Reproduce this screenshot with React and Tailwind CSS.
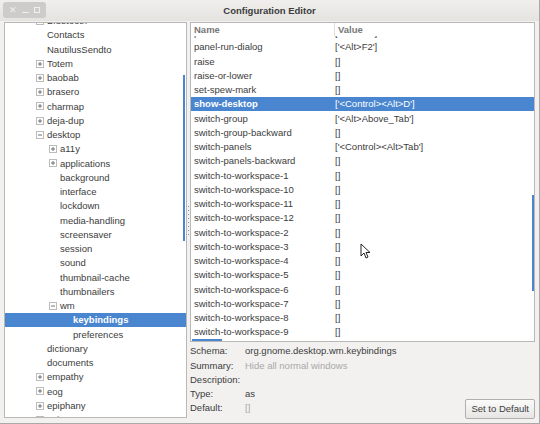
import React from 'react';

const tree = [
  { t: 'Bluetooth', l: 1, e: '+' },
  { t: 'Contacts', l: 1 },
  { t: 'NautilusSendto', l: 1 },
  { t: 'Totem', l: 1, e: '+' },
  { t: 'baobab', l: 1, e: '+' },
  { t: 'brasero', l: 1, e: '+' },
  { t: 'charmap', l: 1, e: '+' },
  { t: 'deja-dup', l: 1, e: '+' },
  { t: 'desktop', l: 1, e: '-' },
  { t: 'a11y', l: 2, e: '+' },
  { t: 'applications', l: 2, e: '+' },
  { t: 'background', l: 2 },
  { t: 'interface', l: 2 },
  { t: 'lockdown', l: 2 },
  { t: 'media-handling', l: 2 },
  { t: 'screensaver', l: 2 },
  { t: 'session', l: 2 },
  { t: 'sound', l: 2 },
  { t: 'thumbnail-cache', l: 2 },
  { t: 'thumbnailers', l: 2 },
  { t: 'wm', l: 2, e: '-' },
  { t: 'keybindings', l: 3, sel: true },
  { t: 'preferences', l: 3 },
  { t: 'dictionary', l: 1 },
  { t: 'documents', l: 1 },
  { t: 'empathy', l: 1, e: '+' },
  { t: 'eog', l: 1, e: '+' },
  { t: 'epiphany', l: 1, e: '+' },
  { t: 'evince', l: 1, e: '+' },
];

const keys = [
  ['panel-main-menu', "['<Alt>F1']"],
  ['panel-run-dialog', "['<Alt>F2']"],
  ['raise', '[]'],
  ['raise-or-lower', '[]'],
  ['set-spew-mark', '[]'],
  ['show-desktop', "['<Control><Alt>D']", true],
  ['switch-group', "['<Alt>Above_Tab']"],
  ['switch-group-backward', '[]'],
  ['switch-panels', "['<Control><Alt>Tab']"],
  ['switch-panels-backward', '[]'],
  ['switch-to-workspace-1', '[]'],
  ['switch-to-workspace-10', '[]'],
  ['switch-to-workspace-11', '[]'],
  ['switch-to-workspace-12', '[]'],
  ['switch-to-workspace-2', '[]'],
  ['switch-to-workspace-3', '[]'],
  ['switch-to-workspace-4', '[]'],
  ['switch-to-workspace-5', '[]'],
  ['switch-to-workspace-6', '[]'],
  ['switch-to-workspace-7', '[]'],
  ['switch-to-workspace-8', '[]'],
  ['switch-to-workspace-9', '[]'],
];

const indent = { 1: 'pl-[31px]', 2: 'pl-[44px]', 3: 'pl-[57px]' };

const Expander = ({ kind }) => (
  <span className="w-[11px] h-[8px] shrink-0 flex items-center">
    {kind ? (
      <svg width="8" height="8" viewBox="0 0 8 8">
        <rect x="0.5" y="0.5" width="7" height="7" fill="#fff" stroke="#bcbcbc" />
        <path d="M2 4h4" stroke="#707070" />
        {kind === '+' && <path d="M4 2v4" stroke="#707070" />}
      </svg>
    ) : null}
  </span>
);

const TreeRow = ({ row }) => (
  <div
    className={`h-[14.25px] flex items-center ${indent[row.l]} ${
      row.sel ? 'bg-[#4a86d0] text-white font-bold' : 'text-[#3c3c3c]'
    }`}
  >
    <Expander kind={row.e} />
    <span className="whitespace-nowrap">{row.t}</span>
  </div>
);

export default function App() {
  return (
    <div
      className="w-[540px] h-[424px] bg-[#f2f1f0] flex flex-col overflow-hidden relative border-r border-b border-[#a9a9a9] text-[9.5px] leading-none"
      style={{ fontFamily: '"Liberation Sans", Arial, sans-serif' }}
    >
      {/* title bar */}
      <div className="h-[21px] shrink-0 relative flex items-center justify-center bg-gradient-to-b from-[#f0efed] to-[#e4e3e0]">
        <div className="absolute left-[3px] top-[2px] w-[43px] h-[16px] rounded-[3px] bg-[#cdccca] flex items-center justify-around px-[3px] text-[#efefef] text-[9px]">
          <span>✕</span>
          <span className="w-[7px] h-[1px] bg-[#efefef] mt-[4px]" />
          <span className="w-[6px] h-[6px] border border-[#efefef]" />
        </div>
        <span className="font-bold text-[#3c3c3c]">Configuration Editor</span>
      </div>

      <div className="flex-1 flex pl-[4px] pt-[1px] pb-[5px] min-h-0">
        {/* left tree */}
        <div className="w-[183px] border border-[#b8b8b6] bg-white overflow-hidden relative shrink-0">
          <div className="-mt-[9.25px]">
            {tree.map((r) => (
              <TreeRow key={r.t} row={r} />
            ))}
          </div>
          <div className="absolute right-[1px] top-[52px] w-[2px] h-[166px] bg-[#4a86d0]" />
        </div>

        {/* paned handle */}
        <div className="w-[3px] shrink-0 flex flex-col items-center justify-center gap-[3px]">
          {[0, 1, 2, 3, 4, 5, 6, 7].map((i) => (
            <span key={i} className="w-[1px] h-[1px] bg-[#8a8a8a]" />
          ))}
        </div>

        {/* right side */}
        <div className="w-[345px] shrink-0 flex flex-col">
          <div className="h-[320px] shrink-0 border border-[#b8b8b6] bg-white flex flex-col overflow-hidden relative">
            <div className="h-[13px] shrink-0 flex items-center text-[#777] font-bold bg-white">
              <span className="w-[143px] pl-[3px] shrink-0">Name</span>
              <span className="border-l border-[#dcdcdc] h-full flex items-center pl-[3px]">Value</span>
            </div>
            <div className="flex-1 min-h-0 overflow-hidden">
              <div className="-mt-[10.25px]">
                {keys.map(([n, v, sel]) => (
                  <div
                    key={n}
                    className={`h-[14.25px] flex items-center ${sel ? 'bg-[#4a86d0] text-white' : 'text-[#3c3c3c]'}`}
                  >
                    <span className={`w-[144px] pl-[3px] shrink-0 whitespace-nowrap ${sel ? 'font-bold' : ''}`}>{n}</span>
                    <span className="whitespace-nowrap">{v}</span>
                  </div>
                ))}
              </div>
            </div>
            <div className="absolute right-0 top-[172px] w-[2px] h-[96px] bg-[#4a86d0]" />
            <div className="absolute left-[1px] bottom-0 w-[30px] h-[2px] bg-[#4a86d0]" />
          </div>

          {/* info */}
          <div className="flex-1 flex items-end pt-[2px]">
            <div className="flex-1 grid grid-cols-[55px_1fr] auto-rows-[14.25px] items-center self-start text-[#3c3c3c]">
              <span>Schema:</span>
              <span>org.gnome.desktop.wm.keybindings</span>
              <span>Summary:</span>
              <span className="text-[#a8a8a8]">Hide all normal windows</span>
              <span>Description:</span>
              <span />
              <span>Type:</span>
              <span>as</span>
              <span>Default:</span>
              <span className="text-[#a8a8a8]">[]</span>
            </div>
            <button className="h-[20px] px-[5px] mb-[-1px] border border-[#b0afad] rounded-[2px] bg-gradient-to-b from-[#fbfbfa] to-[#e6e5e3] text-[#3c3c3c] whitespace-nowrap">
              Set to Default
            </button>
          </div>
        </div>
      </div>

      {/* mouse pointer */}
      <svg className="absolute left-[360px] top-[243px]" width="10" height="16" viewBox="0 0 10 16">
        <path d="M1 1v12l3-3 2 5 2-1-2-4.5h4z" fill="#fff" stroke="#222" strokeWidth="1" strokeLinejoin="round" />
      </svg>
    </div>
  );
}
